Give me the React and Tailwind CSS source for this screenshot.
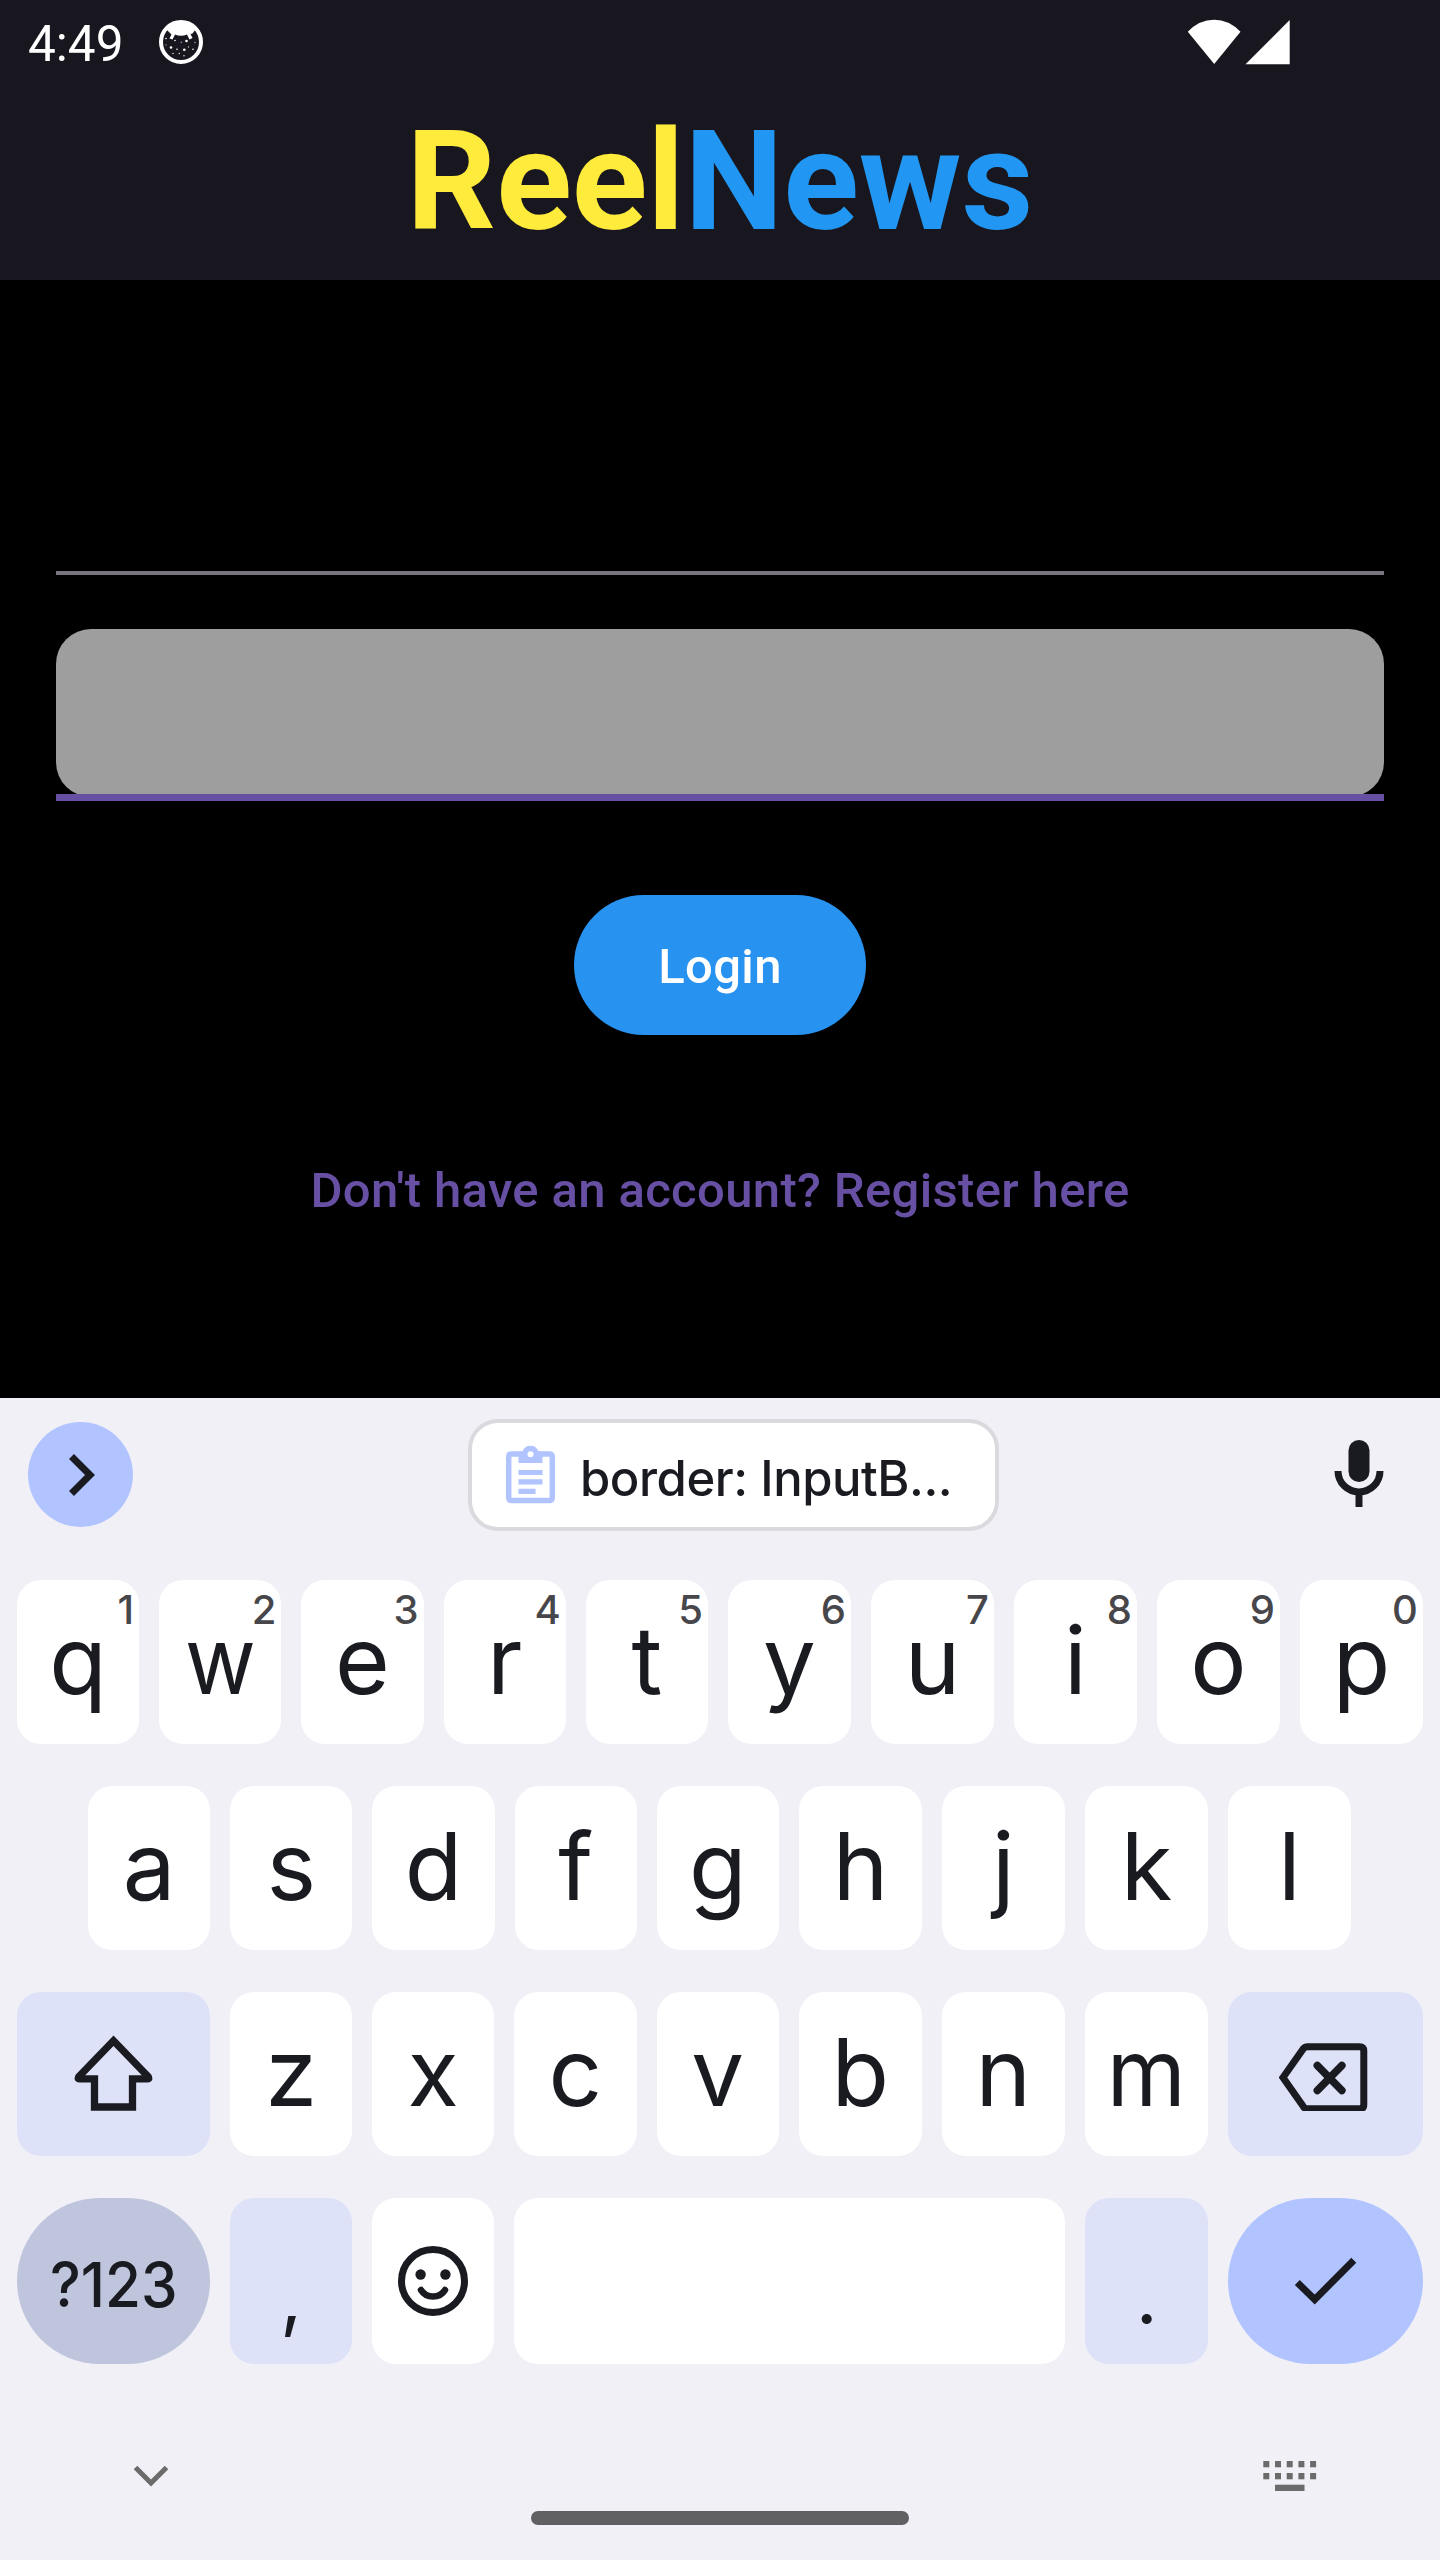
const INK = '#1a1b20';

function StatusBar() {
  return (
    <div className="flex h-[88px] items-center pl-[28px] pr-[150px]">
      <span className="w-[98px] text-[49.500px] leading-[88px] text-white">4:49</span>
      <svg className="ml-[32px] -mt-[4px] shrink-0" width="46" height="46" viewBox="0 0 46 46">
        <circle cx="23" cy="23" r="20" fill="none" stroke="#fff" strokeWidth="4" />
        <path d="M9 11 Q14 2.500 23 2 Q32 2.500 37 11 L34.500 14.500 L32.500 15 L34.500 19 L31.500 20.500 L29 15.500 Q23 18.200 17 15.500 L14.500 20.500 L11.500 19.500 L13.500 15.500 Z" fill="#fff" />
        <g fill="#fff">
          <circle cx="13" cy="28.500" r="1.300" /><circle cx="28.500" cy="22" r="1.300" /><circle cx="26.300" cy="30.700" r="1.300" />
          <circle cx="17" cy="21.500" r=".8" /><circle cx="23.300" cy="23.300" r=".8" opacity=".6" /><circle cx="8" cy="19.500" r=".8" />
          <circle cx="8" cy="26" r=".7" opacity=".6" /><circle cx="19" cy="30.300" r=".8" /><circle cx="30.500" cy="28" r=".7" opacity=".7" />
          <circle cx="15" cy="34.500" r=".8" opacity=".8" /><circle cx="21.300" cy="34.500" r=".8" opacity=".8" /><circle cx="26" cy="36.800" r=".8" opacity=".8" />
          <circle cx="35" cy="30.300" r=".8" /><circle cx="37" cy="23.500" r=".8" opacity=".6" />
        </g>
      </svg>
      <svg className="-mt-[5px] ml-auto shrink-0" width="103" height="46" viewBox="0 0 103 46">
        <path d="M.8 12.800 Q12 .8 27.200 .8 Q42 .8 53.500 12.800 L27.200 45 Z" fill="#fff" />
        <path d="M58.500 45.300 L102.700 1 V45.300 Z" fill="#fff" />
      </svg>
    </div>
  );
}

const LABEL_SCALE = { w: 'scale-x-[0.92]', m: 'scale-x-[0.96]' };

function Key({ label, hint, className = 'bg-white', children }) {
  return (
    <div className={`relative flex h-full items-center justify-center rounded-[24px] ${className}`}>
      {label && <span className={`pb-[5px] text-[94px] leading-none ${LABEL_SCALE[label] || ''}`}>{label}</span>}
      {hint && (
        <span className="absolute right-[5px] top-[10px] text-[40px] font-medium leading-[40px] text-[#47474b]">{hint}</span>
      )}
      {children}
    </div>
  );
}

const ROW_1 = 'qwertyuiop'.split('');
const ROW_2 = 'asdfghjkl'.split('');
const ROW_3 = 'zxcvbnm'.split('');
const HINTS = '1234567890';

export default function App() {
  return (
    <div className="flex h-[2560px] w-[1440px] flex-col overflow-hidden bg-black font-['Roboto',sans-serif]">
      <header className="h-[280px] shrink-0 bg-[#18171f]">
        <StatusBar />
        <h1 className="flex h-[186px] items-center justify-center text-[140px] font-bold leading-none">
          <span className="text-[#ffeb3b]">Reel</span>
          <span className="text-[#2196f3]">News</span>
        </h1>
      </header>

      <main className="flex h-[1118px] shrink-0 flex-col items-center px-[56px]">
        <div className="h-[295px] w-full border-b-4 border-[#79747e]" />
        <div className="relative mt-[54px] h-[168px] w-full rounded-[35px] bg-[#9e9e9e]">
          <div className="absolute -bottom-[3.500px] left-0 h-[7px] w-full bg-[#6750a4]" />
        </div>
        <button className="mt-[98px] h-[140px] w-[292px] rounded-full bg-[#2792f0] pt-[3px] text-[49px] font-medium tracking-[0.35px] text-white">
          Login
        </button>
        <a className="mt-[127px] whitespace-nowrap text-[49px] font-medium leading-[58px] tracking-[0.35px] text-[#6750a4]">
          Don't have an account? Register here
        </a>
      </main>

      <section className="flex h-[1162px] shrink-0 flex-col bg-[#f1f0f7] font-['Inter',sans-serif] text-[#1a1b20]">
        <div className="flex h-[154px] items-center pl-[28px] pr-[52px]">
          <div className="-mt-[1px] flex h-[105px] w-[105px] items-center justify-center rounded-full bg-[#b1c4ff]">
            <svg className="ml-[3px]" width="28" height="44" viewBox="0 0 28 44">
              <path d="M3.500 3.500 L22 22 L3.500 40.500" fill="none" stroke={INK} strokeWidth="7" />
            </svg>
          </div>
          <div className="ml-[335px] flex h-[112px] w-[531px] items-center rounded-[30px] border-4 border-[#d9d9de] bg-white pl-[33px]">
            <svg className="shrink-0" width="51" height="60" viewBox="0 0 51 60">
              <path d="M5.500 9 H44.500 Q47.300 9 47.300 12 V52.500 Q47.300 55.500 44.500 55.500 H6.500 Q3.700 55.500 3.700 52.500 V12 Q3.700 9 6.500 9" fill="none" stroke="#b1c4ff" strokeWidth="5.500" />
              <path fill="#b1c4ff" d="M13.500 6.500 H17.500 A8.500 8.500 0 0 1 25.500 .8 A8.500 8.500 0 0 1 33.500 6.500 H37.500 V18 H13.500 Z" />
              <circle cx="25.500" cy="9.300" r="3" fill="#fff" />
              <path d="M13.500 27.500 H37.500 M13.500 36.800 H37.500 M13.500 46.300 H30.500" stroke="#b1c4ff" strokeWidth="5.200" />
            </svg>
            <span className="ml-[24px] whitespace-nowrap pt-[7px] text-[49px] font-medium leading-none tracking-[-0.450px]">border: InputB...</span>
          </div>
          <svg className="-mt-[3px] ml-auto" width="58" height="70" viewBox="0 0 58 70">
            <rect x="18.500" y="1" width="21" height="42" rx="10.500" fill={INK} />
            <path d="M8 32 A21 21 0 0 0 50 32" fill="none" stroke={INK} strokeWidth="7" />
            <path d="M29 53 V68" stroke={INK} strokeWidth="7" />
          </svg>
        </div>

        <div className="mt-[28px] flex flex-col gap-[42px] px-[17px]">
          <div className="grid h-[164px] grid-cols-[repeat(5,122.2px)_repeat(5,123px)] gap-[20px]">
            {ROW_1.map((c, i) => <Key key={c} label={c} hint={HINTS[i]} />)}
          </div>
          <div className="grid h-[164px] grid-cols-[repeat(5,122.2px)_repeat(4,123px)] gap-[20px] pl-[71px]">
            {ROW_2.map((c) => <Key key={c} label={c} />)}
          </div>
          <div className="grid h-[164px] grid-cols-[193px_repeat(4,122.2px)_repeat(3,123px)_195px] gap-[20px]">
            <Key className="bg-[#dde2f8]">
              <svg width="82" height="80" viewBox="72.5 2034 82 80">
                <path d="M113 2040.800 L78.500 2076.500 Q76.500 2078.800 79 2078.800 H94 V2107 H132 V2078.800 H147 Q149.500 2078.800 147.500 2076.500 Z" fill="none" stroke={INK} strokeWidth="7.300" strokeLinejoin="miter" />
              </svg>
            </Key>
            {ROW_3.map((c) => <Key key={c} label={c} />)}
            <Key className="bg-[#dde2f8]">
              <svg width="92" height="74" viewBox="1279.5 2036.5 92 74">
                <path d="M1283.500 2077 L1304 2048 Q1305.500 2046.200 1308 2046.200 H1360 Q1364.300 2046.200 1364.300 2050.500 V2104 Q1364.300 2108.300 1360 2108.300 H1308 Q1305.500 2108.300 1304 2106.300 Z" fill="none" stroke={INK} strokeWidth="7" />
                <path d="M1317.800 2065 L1342.400 2090 M1342.400 2065 L1317.800 2090" stroke={INK} strokeWidth="7.500" strokeLinecap="round" />
              </svg>
            </Key>
          </div>
          <div className="grid h-[166px] grid-cols-[193px_122.2px_122.2px_1fr_122.6px_195px] gap-[20px]">
            <div className="flex items-center justify-center rounded-full bg-[#c0c5de]">
              <span className="scale-x-[0.94] pt-[7px] text-[62px] font-medium leading-none">?123</span>
            </div>
            <Key className="bg-[#dde2f8]">
              <span className="pt-[30px] text-[76px] leading-none">,</span>
            </Key>
            <Key className="bg-white">
              <svg width="72" height="72" viewBox="0 0 72 72">
                <circle cx="36" cy="36" r="31.500" fill="none" stroke={INK} strokeWidth="7" />
                <circle cx="23.600" cy="29.500" r="5.200" fill={INK} /><circle cx="48.400" cy="29.500" r="5.200" fill={INK} />
                <path d="M24 45 Q28 51.500 36 51.500 T48 45" fill="none" stroke={INK} strokeWidth="6.500" strokeLinecap="round" />
              </svg>
            </Key>
            <Key className="bg-white" />
            <Key className="bg-[#dde2f8]">
              <span className="pt-[30px] text-[76px] leading-none">.</span>
            </Key>
            <div className="flex items-center justify-center rounded-full bg-[#b1c4ff]">
              <svg width="64" height="50" viewBox="1294 2257 64 50">
                <path d="M1297.300 2283.500 L1314.700 2300.500 L1353.800 2261.300" fill="none" stroke={INK} strokeWidth="7" />
              </svg>
            </div>
          </div>
        </div>

        <div className="mt-[94px] flex items-start justify-between pl-[133px] pr-[123px]">
          <svg className="mt-[7px]" width="36" height="24" viewBox="0 0 36 24">
            <path d="M2.500 2.500 L18 18 L33.500 2.500" fill="none" stroke="#6b6b6b" strokeWidth="5" />
          </svg>
          <svg className="mt-[2px]" width="54" height="32" viewBox="0 0 54 32">
            {[0, 1, 2, 3, 4].map((i) => (
              <g key={i} fill="#6b6b6b">
                <rect x={0.300 + i * 11.700} y="1" width="6" height="6.300" />
                <rect x={0.300 + i * 11.700} y="13" width="6" height="6.300" />
              </g>
            ))}
            <rect x="12" y="24.700" width="29.500" height="6.300" fill="#6b6b6b" />
          </svg>
        </div>
        <div className="mx-auto mt-[19px] h-[14px] w-[378px] rounded-full bg-[#606062]" />
      </section>
    </div>
  );
}
